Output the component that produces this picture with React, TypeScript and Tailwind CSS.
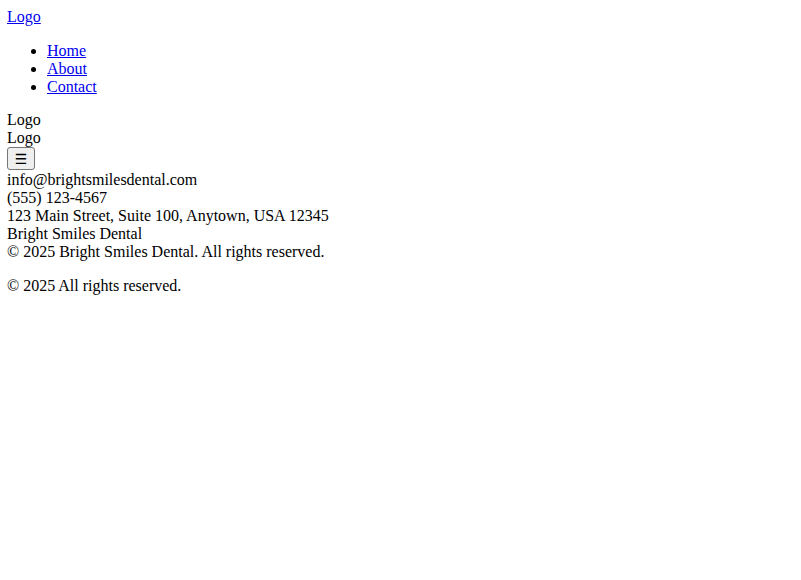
import React from "react";

function App() {
  return (
    <div className="my-2 mr-2 ml-[7px] font-['Liberation_Serif',serif] text-base leading-[normal] text-black">
      <header>
        <a href="#" className="text-[#0000ee] underline">
          Logo
        </a>
        <nav>
          <ul className="my-4 list-disc pl-10">
            <li>
              <a href="#" className="text-[#0000ee] underline">
                Home
              </a>
            </li>
            <li>
              <a href="#" className="text-[#0000ee] underline">
                About
              </a>
            </li>
            <li>
              <a href="#" className="text-[#0000ee] underline">
                Contact
              </a>
            </li>
          </ul>
        </nav>
        <div className="-mt-px">Logo</div>
        <div>Logo</div>
        <button
          type="button"
          className="flex h-[23px] w-[28px] items-center justify-center rounded-[3px] border border-[#767676] bg-[#efefef] font-['DejaVu_Sans',sans-serif] text-[14px] leading-none"
        >
          ☰
        </button>
      </header>
      <footer className="mt-px">
        <div>info@brightsmilesdental.com</div>
        <div>(555) 123-4567</div>
        <div>123 Main Street, Suite 100, Anytown, USA 12345</div>
        <div>Bright Smiles Dental</div>
        <div>© 2025 Bright Smiles Dental. All rights reserved.</div>
        <p className="my-4">© 2025 All rights reserved.</p>
      </footer>
    </div>
  );
}

export default App;
